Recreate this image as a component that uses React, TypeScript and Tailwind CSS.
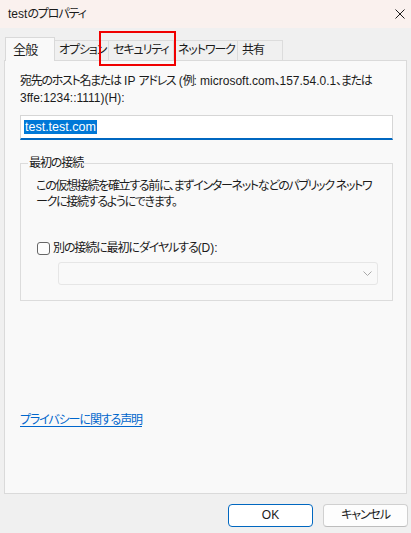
import React from "react";

const L = ({ children }: { children: React.ReactNode }) => <span className="tracking-normal">{children}</span>;

const Tab = ({ label, w, selected }: { label: string; w: number; selected?: boolean }) => (
  <div
    className={
      selected
        ? "relative z-10 -mb-px h-[24px] flex items-center pl-[7px] overflow-hidden whitespace-nowrap border border-b-0 border-[#d9d9d9] bg-[#f9f9f9] text-[13px] tracking-[-0.8px]"
        : "h-[20px] flex items-center pl-[4px] overflow-hidden whitespace-nowrap border border-b-0 border-l-0 border-[#dcdcdc] bg-[#f0f0f0]"
    }
    style={{ width: w }}
  >
    {label}
  </div>
);

export default function App() {
  return (
    <div className="relative w-[411px] h-[533px] overflow-hidden bg-[#f0f0f0] flex flex-col text-[12px] text-[#1b1b1b] font-['Liberation_Sans','Noto_Sans_CJK_JP',sans-serif] [font-feature-settings:'palt'] tracking-[-1.1px] leading-[17px]">
      {/* Title bar */}
      <div className="h-[28px] shrink-0 bg-[#faf1ee] flex items-center justify-between pl-[8px] pr-[5px]">
        <span>
          <L>test</L>のプロパティ
        </span>
        <svg width="10" height="10" viewBox="0 0 10 10" className="mr-[1px]">
          <path d="M0.5 0.5 L9.5 9.5 M9.5 0.5 L0.5 9.5" stroke="#1b1b1b" strokeWidth="1" fill="none" />
        </svg>
      </div>

      <div className="flex flex-col px-[4px] pt-[9px]">
        {/* Tabs */}
        <div className="flex items-end h-[23px] pl-[1px]">
          <Tab label="全般" w={50} selected />
          <Tab label="オプション" w={54} />
          <Tab label="セキュリティ" w={65} />
          <Tab label="ネットワーク" w={64} />
          <Tab label="共有" w={45} />
        </div>

        {/* Panel */}
        <div className="h-[434px] border border-[#dadada] bg-[#f9f9f9] pl-[15px] pr-[13px] pt-[12px] flex flex-col">
          <p className="whitespace-nowrap tracking-[-1.3px]">
            宛先のホスト名または<L> IP </L>アドレス<L> (</L>例<L>: microsoft.com</L>、<L>157.54.0.1</L>、または
            <br />
            <L>3ffe:1234::1111)(H):</L>
          </p>
          <div className="mt-[8px] h-[25px] bg-white border border-[#d6d6d6] border-b-2 border-b-[#0067c0] flex items-center pl-[3px]">
            <span className="bg-[#0078d7] text-white leading-[14px] px-[1px] text-[12.5px] tracking-normal">test.test.com</span>
          </div>

          <fieldset className="mt-[15px] min-w-0 border border-[#dcdcdc] pb-[15px]">
            <legend className="ml-[7px] px-[1px] leading-[17px]">最初の接続</legend>
            <div className="pl-[15px] pr-[14px]">
              <p className="mt-[6px] leading-[16px] whitespace-nowrap tracking-[-1.3px]">
                この仮想接続を確立する前に、まずインターネットなどのパブリック ネットワ
                <br />
                ークに接続するようにできます。
              </p>
              <div className="mt-[30px] h-[17px] flex items-center">
                <div className="w-[13px] h-[13px] ml-[1px] rounded-[3px] border border-[#666666] bg-[#fdfdfd]" />
                <span className="ml-[3px]">
                  別の接続に最初にダイヤルする<L>(D):</L>
                </span>
              </div>
              <div className="mt-[5px] ml-[22px] h-[23px] border border-[#e6e6e6] rounded-[3px] bg-[#f9f9f9] flex items-center justify-end pr-[5px]">
                <svg width="9" height="5" viewBox="0 0 9 5">
                  <path d="M0.5 0.5 L4.5 4.5 L8.5 0.5" stroke="#a8a8a8" strokeWidth="1" fill="none" />
                </svg>
              </div>
            </div>
          </fieldset>

          <a className="mt-[111px] self-start text-[#0066cc] underline underline-offset-[2px]">プライバシーに関する声明</a>
        </div>
      </div>

      {/* Buttons */}
      <div className="flex justify-end gap-[10px] pr-[3px] mt-[10px]">
        <button className="w-[85px] h-[23px] rounded-[4px] border border-[#0067c0] bg-white text-[12px] tracking-normal flex items-center justify-center">
          OK
        </button>
        <button className="w-[85px] h-[23px] rounded-[4px] border border-[#d0d0d0] border-b-[#bdbdbd] bg-[#fdfdfd] text-[12px] flex items-center justify-center">
          キャンセル
        </button>
      </div>

      {/* Red annotation */}
      <div className="absolute left-[99px] top-[31px] w-[77px] h-[35px] border-2 border-[#f00000] pointer-events-none" />
    </div>
  );
}
